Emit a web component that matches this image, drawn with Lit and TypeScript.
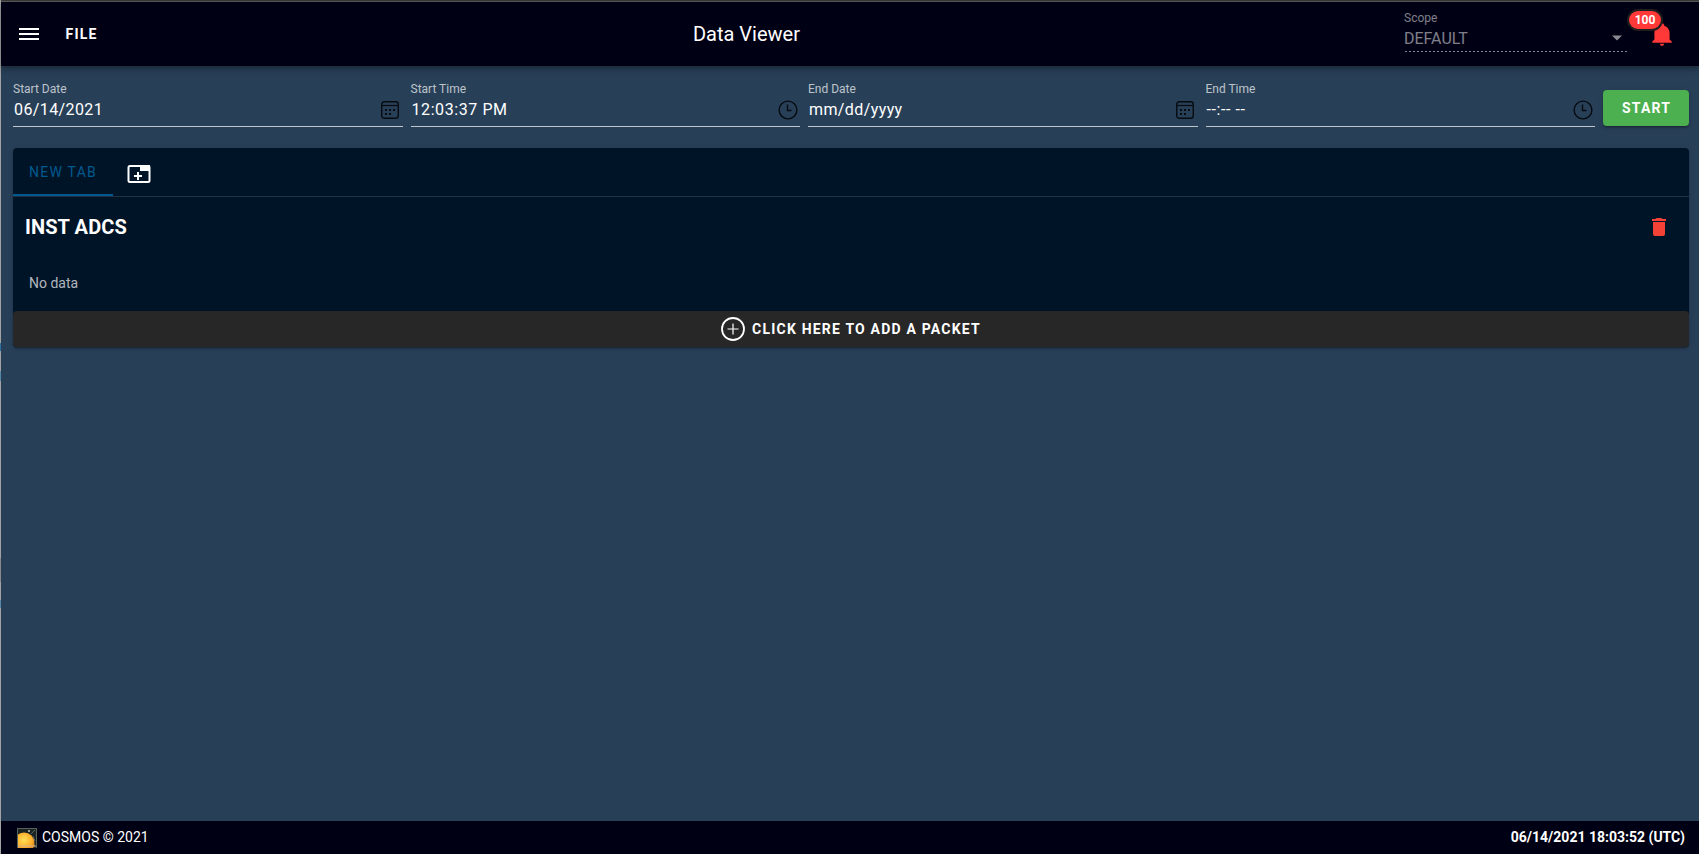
import { LitElement, html, css, svg } from "lit";
import { customElement, property } from "lit/decorators.js";

const calendarIcon = svg`
  <svg class="glyph" width="18" height="18" viewBox="0 0 18 18" fill="none" stroke="#060b10">
    <rect x=".75" y=".75" width="16.5" height="16.5" rx="2.6" stroke-width="1.4" />
    <path d="M1 4.500h16" stroke-width="1.200" />
    <g fill="#060b10" stroke="none">
      <rect x="4" y="8" width="2" height="2" /><rect x="8" y="8" width="2" height="2" /><rect x="12" y="8" width="2" height="2" />
      <rect x="4" y="12" width="2" height="2" /><rect x="8" y="12" width="2" height="2" />
    </g>
  </svg>`;

const clockIcon = svg`
  <svg class="glyph" width="20" height="20" viewBox="0 0 20 20" fill="none" stroke="#060b10">
    <circle cx="10" cy="10" r="8.900" stroke-width="1.400" />
    <path d="M9.500 4.500v6h4" stroke-width="1.400" />
  </svg>`;

@customElement("date-field")
class DateField extends LitElement {
  @property() label = "";
  @property() value = "";
  @property() kind = "date";

  static styles = css`
    :host {
      display: block;
      flex: 1 1 0;
      min-width: 0;
    }
    .label {
      font-size: 12px;
      line-height: 20px;
      height: 19px;
      color: rgba(255, 255, 255, 0.7);
    }
    .row {
      display: flex;
      align-items: center;
      justify-content: space-between;
      height: 29px;
      padding: 0 2px 4px 1px;
      box-sizing: border-box;
      border-bottom: 1px solid #bec5cd;
    }
    .row.date {
      padding-right: 4px;
    }
    .value {
      font-size: 16px;
      line-height: 24px;
      letter-spacing: 0.4px;
      color: #fff;
      white-space: pre;
    }
    .time .value {
      letter-spacing: 0.58px;
    }
    .glyph {
      display: block;
    }
  `;

  render() {
    return html`
      <div class="label">${this.label}</div>
      <div class="row ${this.kind}">
        <span class="value">${this.value}</span>
        ${this.kind === "date" ? calendarIcon : clockIcon}
      </div>
    `;
  }
}

@customElement("app-root")
class AppRoot extends LitElement {
  static styles = css`
    :host {
      display: block;
      height: 100vh;
      box-sizing: border-box;
      padding-left: 1px;
      font-family: Roboto, "Liberation Sans", sans-serif;
      color: #fff;
      background: linear-gradient(
        #a3a3a3 0 343px, #2a6f9f 343px 351px, #a3a3a3 351px 371px, #5a88a8 371px 381px,
        #a3a3a3 381px 558px, #8a8a8a 558px 582px, #a3a3a3 582px 600px, #5a88a8 600px 608px, #a3a3a3 608px
      );
      overflow: hidden;
    }
    .app {
      display: flex;
      flex-direction: column;
      height: 100%;
      background: #283f58;
    }
    .edge {
      height: 1px;
      flex: none;
      background: #393939;
      border-bottom: 1px solid #5b5b5b;
    }
    svg {
      display: block;
      flex: none;
    }
    header {
      height: 64px;
      flex: none;
      display: flex;
      align-items: center;
      background: #000014;
      box-shadow: 0 2px 4px -1px rgba(0, 0, 0, 0.2), 0 4px 5px rgba(0, 0, 0, 0.14), 0 1px 10px rgba(0, 0, 0, 0.12);
    }
    .left {
      display: flex;
      align-items: center;
      width: 88px;
      box-sizing: border-box;
      padding-left: 16px;
      gap: 24.5px;
    }
    .file {
      font-size: 14px;
      font-weight: 700;
      letter-spacing: 1.25px;
    }
    .title {
      flex: 1;
      text-align: center;
      font-size: 20px;
      line-height: 30px;
    }
    .right {
      display: flex;
      height: 64px;
    }
    .scope {
      width: 225px;
      color: rgba(255, 255, 255, 0.5);
      padding-top: 6px;
      box-sizing: border-box;
    }
    .scope-label {
      font-size: 12px;
      line-height: 20px;
      height: 19px;
    }
    .scope-value {
      display: flex;
      justify-content: space-between;
      align-items: center;
      font-size: 16px;
      line-height: 24px;
      height: 24px;
      padding: 0 6px 0 0;
    }
    .scope-value svg {
      margin-bottom: 2px;
    }
    .dots {
      height: 1px;
      margin-left: 1px;
      background: repeating-linear-gradient(90deg, #8a8a94 0 2px, transparent 2px 4px);
    }
    .bell {
      position: relative;
      width: 46px;
      margin-right: 24px;
      padding: 19px 0 0 20px;
      box-sizing: border-box;
    }
    .badge {
      position: absolute;
      top: 9px;
      left: 0;
      width: 32px;
      height: 18px;
      border-radius: 10px;
      background: #ff3838;
      box-shadow: 0 0 0 2px #1e1e1e;
      font-size: 12px;
      line-height: 18px;
      font-weight: 700;
      text-align: center;
    }
    main {
      flex: 1;
      padding: 13px 10px 0 12px;
    }
    .filters {
      display: flex;
      gap: 8px;
    }
    .start {
      width: 86px;
      height: 36px;
      margin-top: 11px;
      border-radius: 4px;
      background: #4caf50;
      font-size: 14px;
      font-weight: 700;
      letter-spacing: 1.15px;
      line-height: 36px;
      text-align: center;
      text-indent: 1px;
      box-shadow: 0 3px 1px -2px rgba(0, 0, 0, 0.2), 0 2px 2px rgba(0, 0, 0, 0.14), 0 1px 5px rgba(0, 0, 0, 0.12);
    }
    .card {
      margin-top: 21px;
      border-radius: 4px;
      background: #001428;
      box-shadow: 0 3px 1px -2px rgba(0, 0, 0, 0.2), 0 2px 2px rgba(0, 0, 0, 0.14), 0 1px 5px rgba(0, 0, 0, 0.12);
    }
    .tabs {
      display: flex;
      height: 48px;
      border-bottom: 1px solid #1f3142;
    }
    .tab {
      width: 100px;
      box-sizing: border-box;
      border-bottom: 2px solid #005a8f;
      color: #005a8f;
      font-size: 14px;
      letter-spacing: 1.25px;
      line-height: 48px;
      text-align: center;
    }
    .add-tab {
      padding: 14px 0 0 14px;
    }
    .packet {
      display: flex;
      justify-content: space-between;
      align-items: center;
      height: 60px;
      padding: 0 18px 0 12px;
      font-size: 20px;
      font-weight: 700;
      letter-spacing: 0.1px;
    }
    .empty {
      height: 54px;
      padding: 0 16px;
      font-size: 14px;
      line-height: 52px;
      color: rgba(255, 255, 255, 0.7);
    }
    .add {
      display: flex;
      align-items: center;
      justify-content: center;
      gap: 7px;
      height: 36px;
      border-radius: 4px;
      background: #272727;
      font-size: 14px;
      font-weight: 700;
      letter-spacing: 1.2px;
    }
    footer {
      height: 33px;
      flex: none;
      display: flex;
      align-items: center;
      justify-content: space-between;
      padding: 0 14px 0 16px;
      background: #000014;
      font-size: 14px;
    }
    .brand {
      display: flex;
      align-items: center;
      gap: 5px;
    }
    .brand span,
    .clock {
      padding-bottom: 1px;
    }
    .clock {
      font-weight: 700;
    }
  `;

  render() {
    return html`
      <div class="app">
        <div class="edge"></div>
        <header>
          <div class="left">
            <svg width="24" height="24" viewBox="0 0 24 24" fill="#fff"><path d="M2 6h20v2H2zM2 11h20v2H2zM2 16h20v2H2z" /></svg>
            <span class="file">FILE</span>
          </div>
          <div class="title">Data Viewer</div>
          <div class="right">
            <div class="scope">
              <div class="scope-label">Scope</div>
              <div class="scope-value">
                <span>DEFAULT</span>
                <svg width="12" height="6" viewBox="0 0 12 6"><path d="M1 0.500h10L6 5.500z" fill="#8a8a94" /></svg>
              </div>
              <div class="dots"></div>
            </div>
            <div class="bell">
              <svg width="26" height="26" viewBox="0 0 24 24" fill="#ff3838"><path d="M21 19v1H3v-1l2-2v-6c0-3.100 2.030-5.830 5-6.710V4a2 2 0 0 1 4 0v.290c2.970.880 5 3.610 5 6.710v6l2 2m-7 2a2 2 0 0 1-4 0" /></svg>
              <div class="badge">100</div>
            </div>
          </div>
        </header>
        <main>
          <div class="filters">
            <date-field label="Start Date" value="06/14/2021" kind="date"></date-field>
            <date-field label="Start Time" value="12:03:37 PM" kind="time"></date-field>
            <date-field label="End Date" value="mm/dd/yyyy" kind="date"></date-field>
            <date-field label="End Time" value="--:-- --" kind="time"></date-field>
            <div class="start">START</div>
          </div>
          <div class="card">
            <div class="tabs">
              <div class="tab">NEW TAB</div>
              <div class="add-tab">
                <svg width="24" height="24" viewBox="0 0 24 24">
                  <rect x="1.500" y="4" width="21" height="16" rx="1.500" fill="none" stroke="#fff" stroke-width="2" />
                  <path d="M13 3h10v6H13zM10 10h2v3h3v2h-3v3h-2v-3H7v-2h3z" fill="#fff" />
                </svg>
              </div>
            </div>
            <div class="packet">
              <span>INST ADCS</span>
              <svg width="24" height="24" viewBox="0 0 24 24" fill="#f44336"><path d="M19 4h-3.500l-1-1h-5l-1 1H5v2h14M6 19a2 2 0 0 0 2 2h8a2 2 0 0 0 2-2V7H6v12z" /></svg>
            </div>
            <div class="empty">No data</div>
            <div class="add">
              <svg width="24" height="24" viewBox="0 0 24 24" fill="none" stroke="#fff">
                <circle cx="12" cy="12" r="11" stroke-width="1.800" />
                <path d="M12 6.500v11M6.500 12h11" stroke-width="1.200" />
              </svg>
              <span>CLICK HERE TO ADD A PACKET</span>
            </div>
          </div>
        </main>
        <footer>
          <div class="brand">
            <svg width="20" height="20" viewBox="0 0 20 20">
              <defs>
                <radialGradient id="planet" cx=".5" cy=".35" r=".65">
                  <stop offset="0" stop-color="#ffe05a" /><stop offset=".55" stop-color="#ffb02c" /><stop offset="1" stop-color="#c9701c" />
                </radialGradient>
                <clipPath id="frame"><rect width="20" height="20" /></clipPath>
              </defs>
              <g clip-path="url(#frame)">
                <rect width="20" height="20" fill="#1c2422" />
                <circle cx="7" cy="15" r="10.500" fill="url(#planet)" />
                <path d="M0 .5h20M.5 0v20M19.500 0v20" stroke="#59635e" />
                <circle cx="12" cy="3" r="1" fill="#b9c4c4" />
                <path d="M14 6l4-4M16 8l2 5" stroke="#5f7377" stroke-width=".8" />
                <path d="M1 18h18" stroke="#d9b287" stroke-width="2" stroke-dasharray="2 .6" opacity=".75" />
              </g>
            </svg>
            <span>COSMOS © 2021</span>
          </div>
          <div class="clock">06/14/2021 18:03:52 (UTC)</div>
        </footer>
      </div>
    `;
  }
}
